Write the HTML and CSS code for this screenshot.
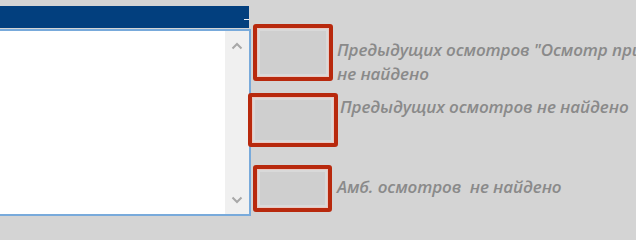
FILE: index.html
```html
<!DOCTYPE html>
<html lang="ru">
<head>
<meta charset="utf-8">
<title>Осмотры</title>
<link rel="stylesheet" href="styles.css">
</head>
<body>
<div class="page">
  <div class="left">
    <div class="titlebar"><span class="dash"></span></div>
    <div class="list">
      <div class="scroll">
        <svg class="arrow" width="12" height="8" viewBox="0 0 12 8"><path d="M1.5 6.5 L6 2 L10.5 6.5" fill="none" stroke="#a8a8a8" stroke-width="2"/></svg>
        <svg class="arrow" width="12" height="8" viewBox="0 0 12 8"><path d="M1.5 1.5 L6 6 L10.5 1.5" fill="none" stroke="#a8a8a8" stroke-width="2"/></svg>
      </div>
    </div>
  </div>
  <div class="right">
    <div class="row row1">
      <div class="box box1"><div class="inner"></div></div>
      <div class="label label1">Предыдущих осмотров "Осмотр при поступлении"<br>не найдено</div>
    </div>
    <div class="row row2">
      <div class="box box2"><div class="inner"></div></div>
      <div class="label label2">Предыдущих осмотров не найдено</div>
    </div>
    <div class="row row3">
      <div class="box box3"><div class="inner"></div></div>
      <div class="label label3">Амб. осмотров&nbsp; не найдено</div>
    </div>
  </div>
</div>
</body>
</html>
```
FILE: styles.css
```css
html, body {
  margin: 0;
  padding: 0;
  width: 636px;
  height: 228px;
  overflow: hidden;
  background: #d4d4d4;
}
.page {
  display: flex;
  align-items: flex-start;
  font-family: "Open Sans", "Noto Sans", sans-serif;
}
.left {
  width: 251px;
  flex: none;
  padding-top: 6px;
  display: flex;
  flex-direction: column;
}
.titlebar {
  width: 249px;
  height: 22px;
  background: #023f7e;
  display: flex;
  justify-content: flex-end;
  align-items: flex-end;
}
.dash {
  width: 5px;
  height: 1px;
  background: #e8eef6;
  margin-bottom: 8px;
}
.list {
  margin-top: 1px;
  height: 183px;
  background: #ffffff;
  border: 2px solid #78aadb;
  border-left: none;
  display: flex;
  justify-content: flex-end;
}
.scroll {
  width: 24px;
  background: #f0f0f0;
  display: flex;
  flex-direction: column;
  justify-content: space-between;
  align-items: center;
  padding: 11px 0 10px;
}
.arrow { display: block; }
.right {
  display: flex;
  flex-direction: column;
  min-width: 0;
}
.row {
  display: flex;
  align-items: flex-start;
}
.box {
  flex: none;
  box-sizing: border-box;
  height: 100%;
  border: 4px solid #b8290d;
  border-radius: 3px;
  background: #ecc7c0;
  padding: 1px;
}
.inner {
  box-sizing: border-box;
  height: 100%;
  background: #cfcfcf;
  border: 2px solid #d9d9d9;
}
.label {
  color: #8a8a8a;
  font-style: italic;
  font-weight: 600;
  font-size: 17px;
  line-height: 24px;
  white-space: nowrap;
  letter-spacing: -0.1px;
}
.row1 { margin-top: 24px; margin-left: 2px; height: 57px; }
.box1 { width: 80px; }
.label1 { margin-left: 4px; padding-top: 14px; }
.row2 { margin-top: 12px; margin-left: -3px; height: 54px; }
.box2 { width: 90px; }
.label2 { margin-left: 2px; padding-top: 2px; }
.row3 { margin-top: 18px; margin-left: 2px; height: 47px; }
.box3 { width: 79px; }
.label3 { margin-left: 5px; padding-top: 10px; }
```
